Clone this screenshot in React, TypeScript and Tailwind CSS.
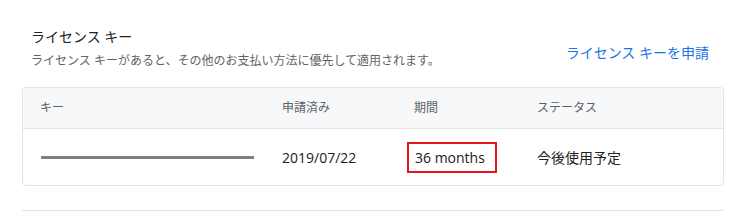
const rows = [
  { applied: "2019/07/22", period: "36 months", status: "今後使用予定" },
];

const font = "font-['Open_Sans','Noto_Sans_CJK_JP',sans-serif]";

export default function App() {
  return (
    <div className={`w-[746px] h-[212px] bg-white overflow-hidden ${font}`}>
      <div className="pt-[27px] pl-[22px] pr-[22px]">
        <div className="flex items-end justify-between pl-[9px]">
          <div>
            <h2 className="text-[14px] leading-[20px] text-[#202124]">ライセンス キー</h2>
            <p className="mt-[6px] text-[12px] leading-[16px] text-[#5f6368]">
              ライセンス キーがあると、その他のお支払い方法に優先して適用されます。
            </p>
          </div>
          <a className="mb-[7px] mr-[15px] text-[14px] leading-[18px] text-[#1a73e8]">
            ライセンス キーを申請
          </a>
        </div>

        <div className="mt-[18px] border border-[#e3e4e6] rounded-[4px] overflow-hidden">
          <div className="grid grid-cols-[259px_132px_123px_1fr] h-[41px] items-center bg-[#f7f8fa] border-b border-[#e3e4e6] text-[12px] text-[#5f6368]">
            <div className="pl-[17px]">キー</div>
            <div>申請済み</div>
            <div>期間</div>
            <div>ステータス</div>
          </div>
          {rows.map((r) => (
            <div
              key={r.applied}
              className="grid grid-cols-[259px_132px_123px_1fr] h-[56px] items-center text-[14px] text-[#202124]"
            >
              <div className="pl-[18px]">
                <div className="w-[213px] h-[3px] bg-[#808080]" />
              </div>
              <div>{r.applied}</div>
              <div>
                <span className="inline-flex items-center h-[31px] -ml-[7px] pl-[6px] pr-[10px] border-2 border-[#e3141d]">
                  {r.period}
                </span>
              </div>
              <div>{r.status}</div>
            </div>
          ))}
        </div>

        <div className="mt-[24px] border-t border-[#e3e4e6]" />
      </div>
    </div>
  );
}
